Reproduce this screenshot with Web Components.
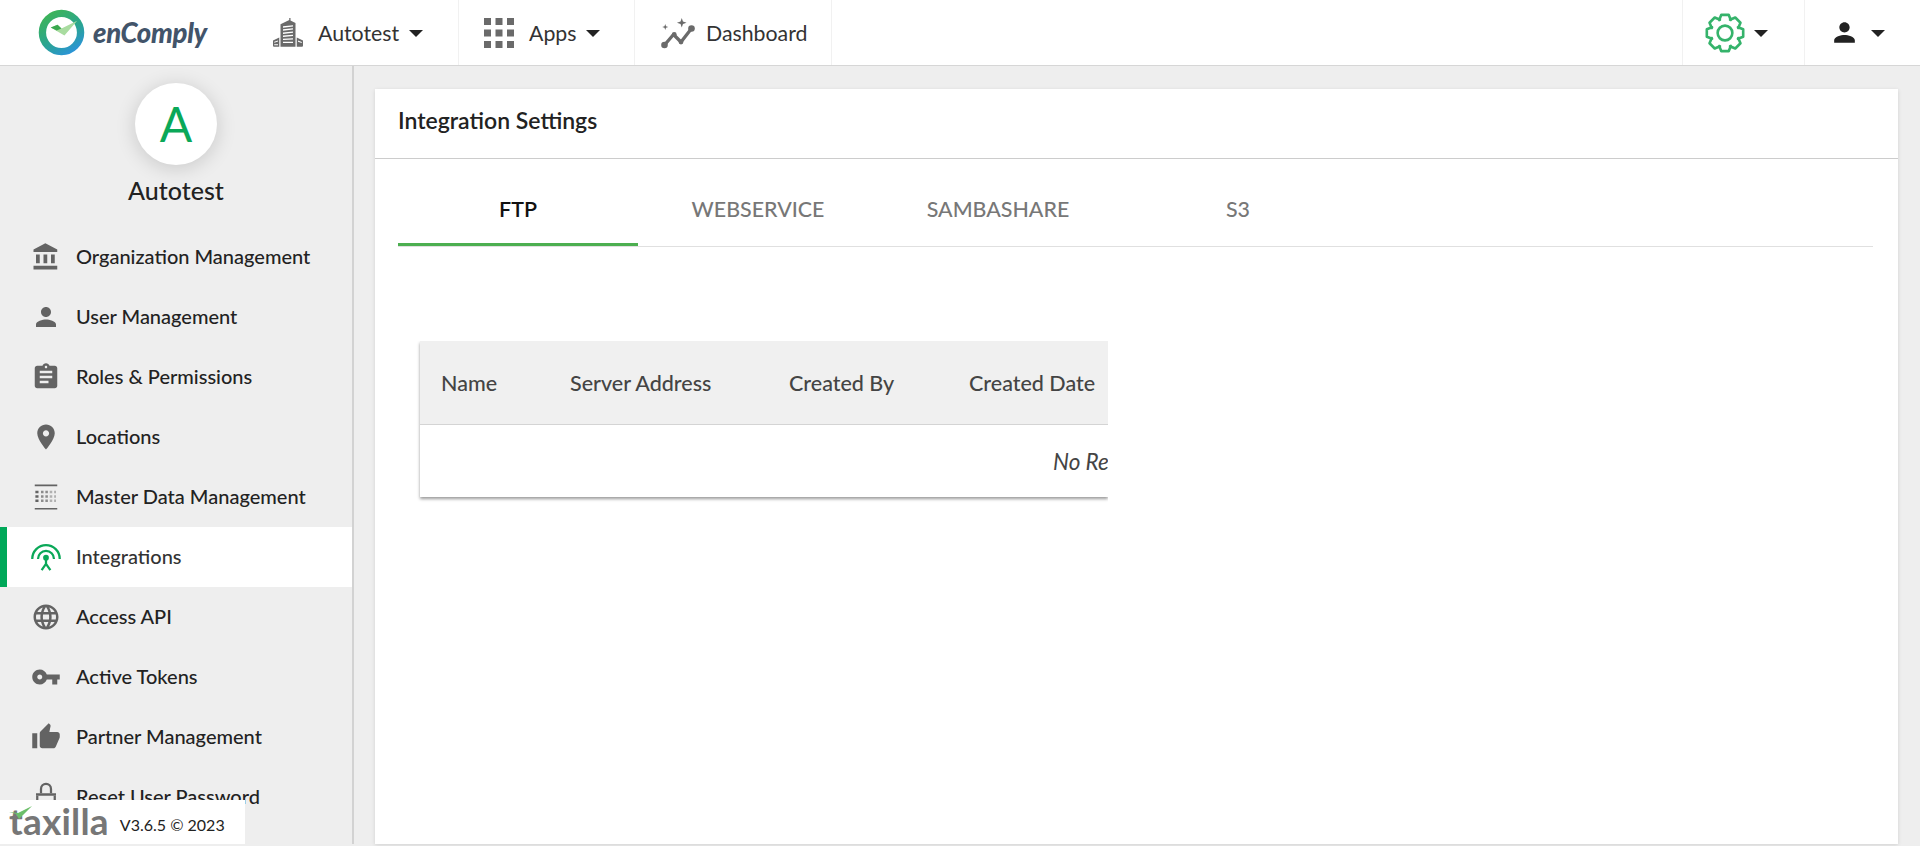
<!DOCTYPE html>
<html>
<head>
<meta charset="utf-8">
<title>Integration Settings</title>
<style>
    html, body { margin: 0; height: 846px; overflow: hidden; }
    body { font-family: "Lato", "Liberation Sans", sans-serif; background: #eee; color: #222; }
    #app { display: flex; flex-direction: column; height: 846px; }
    #main { display: flex; flex: 1; min-height: 0; }
</style>
</head>
<body>
<div id="app">
    <top-bar>
        <en-logo slot="logo"></en-logo>
        <bar-item icon="building" size="30" gap="15" width="211">Autotest</bar-item>
        <bar-item icon="apps" size="30" gap="15" width="176">Apps</bar-item>
        <bar-item icon="dashboard" size="36" gap="10" width="197" nocaret>Dashboard</bar-item>
        <bar-item slot="right" icon="gear" size="42" gap="8" width="122" lead="21" green></bar-item>
        <bar-item slot="right" icon="user" size="31" gap="11" width="116" lead="24" dark></bar-item>
    </top-bar>
    <div id="main">
        <side-nav name="Autotest">
            <nav-row icon="bank">Organization Management</nav-row>
            <nav-row icon="person">User Management</nav-row>
            <nav-row icon="clipboard">Roles &amp; Permissions</nav-row>
            <nav-row icon="pin">Locations</nav-row>
            <nav-row icon="masterdata">Master Data Management</nav-row>
            <nav-row icon="signal" active>Integrations</nav-row>
            <nav-row icon="globe">Access API</nav-row>
            <nav-row icon="key">Active Tokens</nav-row>
            <nav-row icon="thumb">Partner Management</nav-row>
            <nav-row icon="lock">Reset User Password</nav-row>
        </side-nav>
        <settings-card title-text="Integration Settings">
            <tab-strip tabs="FTP,WEBSERVICE,SAMBASHARE,S3"></tab-strip>
            <empty-table></empty-table>
        </settings-card>
    </div>
</div>

<script>
function gearPath() {
    // 8 teeth, outline only
    let d = '';
    const cx = 12, cy = 12, teeth = 8;
    for (let i = 0; i < teeth; i++) {
        const a = i * Math.PI * 2 / teeth;
        const pts = [[8.1, -0.42], [10.6, -0.2], [10.6, 0.2], [8.1, 0.42]];
        pts.forEach((p, n) => {
            const x = (cx + p[0] * Math.cos(a + p[1])).toFixed(2);
            const y = (cy + p[0] * Math.sin(a + p[1])).toFixed(2);
            d += (i === 0 && n === 0 ? 'M' : 'L') + x + ' ' + y;
        });
    }
    return d + 'Z';
}

const ICONS = {
    bank: '<path d="M4 10v7h3v-7H4zm6 0v7h3v-7h-3zM2 22h19v-3H2v3zm14-12v7h3v-7h-3zm-4.500-9L2 6v2h19V6l-9.500-5z"/>',
    person: '<path d="M12 12c2.210 0 4-1.790 4-4s-1.790-4-4-4-4 1.790-4 4 1.790 4 4 4zm0 2c-2.670 0-8 1.340-8 4v2h16v-2c0-2.660-5.330-4-8-4z"/>',
    user: '<path d="M12 12c2.210 0 4-1.790 4-4s-1.790-4-4-4-4 1.790-4 4 1.790 4 4 4zm0 2c-2.670 0-8 1.340-8 4v2h16v-2c0-2.660-5.330-4-8-4z"/>',
    clipboard: '<path d="M19 3h-4.180C14.400 1.840 13.300 1 12 1c-1.300 0-2.400.840-2.820 2H5c-1.100 0-2 .900-2 2v14c0 1.100.900 2 2 2h14c1.100 0 2-.900 2-2V5c0-1.100-.900-2-2-2zm-7 0c.550 0 1 .450 1 1s-.450 1-1 1-1-.450-1-1 .450-1 1-1zm2 14H7v-2h7v2zm3-4H7v-2h10v2zm0-4H7V7h10v2z"/>',
    pin: '<path d="M12 2C8.130 2 5 5.130 5 9c0 5.250 7 13 7 13s7-7.750 7-13c0-3.870-3.130-7-7-7zm0 9.500c-1.380 0-2.500-1.120-2.500-2.500s1.120-2.500 2.500-2.500 2.500 1.120 2.500 2.500-1.120 2.500-2.500 2.500z"/>',
    masterdata: '<path d="M3 2h18v1.300H3zM3 20.700h18V22H3z"/><path d="M3.500 7h2.500v2H3.500zM3.500 10.500h2.500v2H3.500zM3.500 14h2.500v2H3.500z"/><g opacity=".7"><path d="M8 7h2v2H8zM8 10.500h2v2H8zM8 14h2v2H8zM11.500 7h2v2h-2zM11.500 10.500h2v2h-2zM11.500 14h2v2h-2z"/></g><g opacity=".45"><path d="M15 7h2v2h-2zM15 10.500h2v2h-2zM15 14h2v2h-2zM18.500 7h1.500v2h-1.500zM18.500 10.500h1.500v2h-1.500zM18.500 14h1.500v2h-1.500z"/></g>',
    signal: '<g fill="none" stroke="currentColor" stroke-width="1.800"><path d="M1 13.500a11 11 0 0 1 22 0"/><path d="M5.600 13.500a6.400 6.400 0 0 1 12.800 0"/><path d="M12 12v6M12 17.500l-3.500 5M12 17.500l3.500 5"/></g><circle cx="12" cy="12.500" r="2.300"/>',
    globe: '<path d="M11.990 2C6.470 2 2 6.480 2 12s4.470 10 9.990 10C17.520 22 22 17.520 22 12S17.520 2 11.990 2zm6.930 6h-2.950c-.320-1.250-.780-2.450-1.380-3.560 1.840.630 3.370 1.910 4.330 3.560zM12 4.040c.830 1.200 1.480 2.530 1.910 3.960h-3.820c.430-1.430 1.080-2.760 1.910-3.960zM4.260 14C4.100 13.360 4 12.690 4 12s.100-1.360.260-2h3.380c-.080.660-.140 1.320-.140 2 0 .680.060 1.340.140 2H4.260zm.820 2h2.950c.320 1.250.780 2.450 1.380 3.560-1.840-.630-3.370-1.900-4.330-3.560zm2.950-8H5.080c.960-1.660 2.490-2.930 4.330-3.560C8.810 5.550 8.350 6.750 8.030 8zM12 19.960c-.830-1.200-1.480-2.530-1.910-3.960h3.820c-.430 1.430-1.080 2.760-1.910 3.960zM14.340 14H9.660c-.090-.660-.160-1.320-.160-2 0-.680.070-1.350.160-2h4.680c.090.650.160 1.320.160 2 0 .680-.070 1.340-.160 2zm.250 5.560c.600-1.110 1.060-2.310 1.380-3.560h2.950c-.960 1.650-2.490 2.930-4.330 3.560zM16.360 14c.080-.660.140-1.320.140-2 0-.680-.060-1.340-.140-2h3.380c.160.640.260 1.310.260 2s-.100 1.360-.260 2h-3.380z"/>',
    key: '<path d="M12.650 10C11.830 7.670 9.610 6 7 6c-3.310 0-6 2.690-6 6s2.690 6 6 6c2.610 0 4.830-1.670 5.650-4H17v4h4v-4h2v-4H12.650zM7 14c-1.100 0-2-.900-2-2s.900-2 2-2 2 .900 2 2-.900 2-2 2z"/>',
    thumb: '<path d="M1 21h4V9H1v12zm22-11c0-1.100-.900-2-2-2h-6.310l.950-4.570.030-.320c0-.410-.170-.790-.440-1.060L14.170 1 7.590 7.590C7.220 7.950 7 8.450 7 9v10c0 1.100.900 2 2 2h9c.830 0 1.540-.500 1.800-1.220l3.020-7.050c.080-.230.180-.470.180-.730v-2z"/>',
    lock: '<path fill="none" stroke="currentColor" stroke-width="1.800" d="M8 9V5.500a4 4 0 0 1 8 0V9"/><path d="M4 9h16v2H4z"/><path fill="none" stroke="currentColor" stroke-width="1.800" d="M5 11v11h14V11"/>',
    apps: '<path d="M0 0h5.600v5.600H0zM9.200 0h5.600v5.600H9.200zM18.400 0H24v5.600h-5.600zM0 9.200h5.600v5.600H0zM9.200 9.200h5.600v5.600H9.200zM18.400 9.200H24v5.600h-5.600zM0 18.400h5.600V24H0zM9.200 18.400h5.600V24H9.200zM18.400 18.400H24V24h-5.600z"/>',
    building: '<path d="M6 5l7-3.500V0h1v2l4 2v19H6z"/><path fill="#fff" d="M8 6.500l8-.800v1l-8 1zM8 9l8-.800v1l-8 1zM8 11.500l8-.800v1l-8 1zM8 14l8-.600v1l-8 .800zM8 16.500l8-.400v1l-8 .500zM8 19h8v1H8z"/><path d="M0 18l5-2.500V23H1c-.600 0-1-.400-1-1zM19 15.500l5 2.500v4c0 .600-.400 1-1 1h-4z"/><path fill="#fff" d="M1 19l3-1v.800l-3 .900zM1 21h3v.800H1zM20 18l3 1.200v.800l-3-1z"/>',
    dashboard: '<g fill="none" stroke="currentColor" stroke-width="2.200" stroke-linecap="round" stroke-linejoin="round"><path d="M3 20l6-7 5 5 7-9"/></g><circle cx="3" cy="20" r="2.200"/><circle cx="21" cy="9" r="2.200"/><circle cx="9.500" cy="13" r="1.600"/><circle cx="14" cy="18" r="1.600"/><path d="M14.500 2l.800 2.400 2.400.800-2.400.800-.800 2.400-.800-2.400-2.400-.800 2.400-.800zM3.500 6l.500 1.500 1.500.500-1.500.500-.500 1.500-.500-1.500L1.500 8 3 7.500z"/>',
    gear: '<path fill="none" stroke="currentColor" stroke-width="1.500" stroke-linejoin="round" d="' + gearPath() + '"/><circle cx="12" cy="12" r="4.200" fill="none" stroke="currentColor" stroke-width="1.500"/>'
};

class UiIcon extends HTMLElement {
    constructor() {
        super();
        this.attachShadow({mode: 'open'});
    }
    connectedCallback() {
        const size = this.getAttribute('size') || 26;
        this.shadowRoot.innerHTML = `
        <style>
            :host { display: inline-flex; width: ${size}px; height: ${size}px; flex: none; }
            svg { width: 100%; height: 100%; fill: currentColor; }
        </style>
        <svg viewBox="0 0 24 24">${ICONS[this.getAttribute('name')] || ''}</svg>`;
    }
}
customElements.define('ui-icon', UiIcon);

class TopBar extends HTMLElement {
    constructor() {
        super();
        this.attachShadow({mode: 'open'}).innerHTML = `
        <style>
            :host { display: flex; flex: none; height: 65px; background: #fff; border-bottom: 1px solid #d6d6d6; }
            .logo { display: flex; width: 248px; flex: none; }
            .left, .right { display: flex; }
            .right { margin-left: auto; }
        </style>
        <div class="logo"><slot name="logo"></slot></div>
        <div class="left"><slot></slot></div>
        <div class="right"><slot name="right"></slot></div>`;
    }
}
customElements.define('top-bar', TopBar);

class EnLogo extends HTMLElement {
    constructor() {
        super();
        this.attachShadow({mode: 'open'}).innerHTML = `
        <style>
            :host { display: flex; align-items: center; width: 248px; padding-left: 38px; box-sizing: border-box; }
            svg { width: 47px; height: 47px; flex: none; }
            span { margin-left: 8px; font: italic 900 27.500px "Lato", sans-serif; color: #42546a; letter-spacing: -.3px; }
        </style>
        <svg viewBox="0 0 48 48">
            <defs><linearGradient id="ring" x1="0.2" y1="0" x2="0.8" y2="1">
                <stop offset="0" stop-color="#3cb35a"/><stop offset=".55" stop-color="#2aa590"/><stop offset="1" stop-color="#2b94d6"/>
            </linearGradient></defs>
            <circle cx="24" cy="24" r="19.500" fill="none" stroke="url(#ring)" stroke-width="7.500"/>
            <path d="M13 19l7-3 4 4 16-8-13 15z" fill="#a9dca0"/>
            <path d="M13 19l7-3 4 4-5 2z" fill="#3aa84f"/>
        </svg>
        <span>enComply</span>`;
    }
}
customElements.define('en-logo', EnLogo);

class BarItem extends HTMLElement {
    constructor() {
        super();
        this.attachShadow({mode: 'open'});
    }
    connectedCallback() {
        const color = this.hasAttribute('green') ? '#35b36b' : this.hasAttribute('dark') ? '#222' : '#6a6a6a';
        const lead = this.getAttribute('lead') || 25;
        const hasText = this.textContent.trim().length > 0;
        const caret = this.hasAttribute('nocaret') ? '' : '<i></i>';
        this.shadowRoot.innerHTML = `
        <style>
            :host { display: flex; align-items: center; box-sizing: border-box; height: 65px;
                    width: ${this.getAttribute('width')}px; padding-left: ${lead}px;
                    border-right: 1px solid #f1f1f1; font-size: 21.300px; color: #333; }
            :host([slot="right"]) { border-right: 0; border-left: 1px solid #f1f1f1; }
            ui-icon { color: ${color}; margin-right: ${this.getAttribute('gap')}px; }
            i { width: 0; height: 0; margin: 2px 0 0 ${hasText ? 10 : 0}px; border: 7px solid transparent; border-top-color: #222; border-bottom: 0; }
        </style>
        <ui-icon name="${this.getAttribute('icon')}" size="${this.getAttribute('size')}"></ui-icon>
        <slot></slot>${caret}`;
    }
}
customElements.define('bar-item', BarItem);

class SideNav extends HTMLElement {
    constructor() {
        super();
        this.attachShadow({mode: 'open'});
    }
    connectedCallback() {
        const name = this.getAttribute('name');
        this.shadowRoot.innerHTML = `
        <style>
            :host { display: flex; flex-direction: column; flex: none; position: relative; width: 354px; box-sizing: border-box;
                    height: 778px; border-right: 2px solid #d2d2d2; background: #eee; overflow: hidden; }
            .profile { display: flex; flex-direction: column; align-items: center; flex: none; height: 161px; padding-top: 17px; box-sizing: border-box; }
            .avatar { width: 82px; height: 82px; border-radius: 50%; background: #fff; color: #0aa858;
                      display: flex; align-items: center; justify-content: center; font-size: 48px; line-height: 1;
                      box-shadow: 0 3px 20px rgba(0,0,0,.16); }
            .name { margin-top: 11px; font-size: 25px; font-weight: 500; color: #222; line-height: 28px; }
            .foot { position: absolute; left: 0; top: 734px; width: 245px; height: 45px; background: #fff;
                    display: flex; align-items: center; padding-left: 9px; box-sizing: border-box; }
            .brand { position: relative; font-size: 37px; font-weight: 700; color: #777; letter-spacing: .2px; line-height: 40px; margin-top: -4px; }
            .brand svg { position: absolute; left: 0; top: 5px; width: 24px; height: 14px; }
            .ver { margin-left: 11px; font-size: 16px; color: #222; margin-top: 4px; }
        </style>
        <div class="profile">
            <div class="avatar">${name.charAt(0)}</div>
            <div class="name">${name}</div>
        </div>
        <slot></slot>
        <div class="foot">
            <span class="brand">taxilla<svg viewBox="0 0 24 14"><path d="M0 6l7 2 3 5L23 0 9 7z" fill="#6cbf6a"/></svg></span>
            <span class="ver">V3.6.5 © 2023</span>
        </div>`;
    }
}
customElements.define('side-nav', SideNav);

class NavRow extends HTMLElement {
    constructor() {
        super();
        this.attachShadow({mode: 'open'});
    }
    connectedCallback() {
        this.shadowRoot.innerHTML = `
        <style>
            :host { display: flex; align-items: center; flex: none; height: 60px; padding-left: 31px; box-sizing: border-box;
                    font-size: 20px; font-weight: 500; color: #222; }
            :host([active]) { background: #fff; box-shadow: inset 7px 0 0 #00a859; color: #333; }
            ui-icon { color: #636363; margin-right: 15px; }
            :host([active]) ui-icon { color: #0aa858; }
            span { margin-top: -2px; }
        </style>
        <ui-icon name="${this.getAttribute('icon')}" size="30"></ui-icon>
        <span><slot></slot></span>`;
    }
}
customElements.define('nav-row', NavRow);

class SettingsCard extends HTMLElement {
    constructor() {
        super();
        this.attachShadow({mode: 'open'});
    }
    connectedCallback() {
        this.shadowRoot.innerHTML = `
        <style>
            :host { display: flex; flex-direction: column; flex: 1; min-width: 0; box-sizing: border-box;
                    margin: 23px 22px 2px 21px; background: #fff; box-shadow: 0 1px 4px rgba(0,0,0,.12); }
            header { flex: none; height: 69px; box-sizing: content-box; display: flex; align-items: center; padding: 0 23px;
                     border-bottom: 1px solid #ccc; font-size: 23px; font-weight: 600; color: #222; }
            header span { margin-top: -8px; }
            .body { padding: 0 25px 0 23px; }
        </style>
        <header><span>${this.getAttribute('title-text')}</span></header>
        <div class="body"><slot></slot></div>`;
    }
}
customElements.define('settings-card', SettingsCard);

class TabStrip extends HTMLElement {
    constructor() {
        super();
        this.attachShadow({mode: 'open'});
    }
    connectedCallback() {
        const tabs = this.getAttribute('tabs').split(',');
        this.shadowRoot.innerHTML = `
        <style>
            :host { display: flex; height: 88px; border-bottom: 1px solid #e0e0e0; box-sizing: border-box; }
            div { width: 240px; height: 87px; box-sizing: border-box; padding-top: 13px; display: flex; align-items: center; justify-content: center;
                  font-size: 21.400px; font-weight: 500; color: #777; }
            div.on { color: #111; border-bottom: 3px solid #4caf50; padding-top: 16px; font-weight: 600; }
        </style>
        ${tabs.map((t, i) => `<div class="${i === 0 ? 'on' : ''}">${t}</div>`).join('')}`;
    }
}
customElements.define('tab-strip', TabStrip);

class EmptyTable extends HTMLElement {
    constructor() {
        super();
        this.attachShadow({mode: 'open'}).innerHTML = `
        <style>
            :host { display: block; width: 688px; margin: 94px 0 0 22px; background: #fff; box-shadow: 0 2px 3px rgba(0,0,0,.4); clip-path: inset(0 0 -8px -8px); }
            .head { display: grid; grid-template-columns: 132px 219px 180px 157px; height: 83px; align-items: center;
                    background: #f0f0f0; border-bottom: 1px solid #d4d4d4; font-size: 21.500px; font-weight: 500; color: #444; }
            .head span:first-child { padding-left: 21px; }
            .head span { padding-left: 18px; white-space: nowrap; }
            .empty { height: 72px; display: flex; align-items: center; padding-left: 633px; overflow: hidden; white-space: nowrap;
                     font-size: 22.500px; font-style: italic; color: #444; }
        </style>
        <div class="head"><span>Name</span><span>Server Address</span><span>Created By</span><span>Created Date</span></div>
        <div class="empty">No Records Found</div>`;
    }
}
customElements.define('empty-table', EmptyTable);
</script>
</body>
</html>
